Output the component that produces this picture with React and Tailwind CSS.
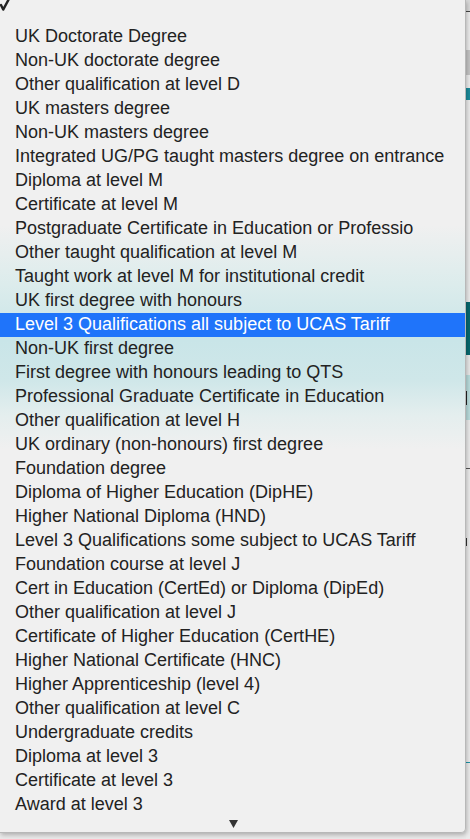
import React from "react";

const items = [
  "UK Doctorate Degree",
  "Non-UK doctorate degree",
  "Other qualification at level D",
  "UK masters degree",
  "Non-UK masters degree",
  "Integrated UG/PG taught masters degree on entrance",
  "Diploma at level M",
  "Certificate at level M",
  "Postgraduate Certificate in Education or Professio",
  "Other taught qualification at level M",
  "Taught work at level M for institutional credit",
  "UK first degree with honours",
  "Level 3 Qualifications all subject to UCAS Tariff",
  "Non-UK first degree",
  "First degree with honours leading to QTS",
  "Professional Graduate Certificate in Education",
  "Other qualification at level H",
  "UK ordinary (non-honours) first degree",
  "Foundation degree",
  "Diploma of Higher Education (DipHE)",
  "Higher National Diploma (HND)",
  "Level 3 Qualifications some subject to UCAS Tariff",
  "Foundation course at level J",
  "Cert in Education (CertEd) or Diploma (DipEd)",
  "Other qualification at level J",
  "Certificate of Higher Education (CertHE)",
  "Higher National Certificate (HNC)",
  "Higher Apprenticeship (level 4)",
  "Other qualification at level C",
  "Undergraduate credits",
  "Diploma at level 3",
  "Certificate at level 3",
  "Award at level 3",
];

const SELECTED = 12;

export default function App() {
  return (
    <div
      className="flex w-[470px] h-[839px] overflow-hidden bg-[#e9e9e9]"
      style={{ fontFamily: '"Liberation Sans", Arial, sans-serif' }}
    >
      {/* menu */}
      <div className="relative z-10 flex flex-col w-[466px] h-[833px] shrink-0 rounded-br-[5px] border-r border-b border-[#b8b8b8] shadow-[1px_2px_4px_rgba(0,0,0,0.25)] bg-[linear-gradient(to_bottom,#f0f0f0_0px,#f0f0f0_225px,#dcecec_285px,#c9e5e8_340px,#cfe7e9_380px,#e4eeee_415px,#f0f0f0_450px,#f0f0f0_100%)]">
        <div className="h-[25px] shrink-0 relative">
          <svg className="absolute left-0 top-0" width="11" height="11" viewBox="0 0 11 11">
            <path d="M1 5 L3.2 9.6 L8.8 -0.8" fill="none" stroke="#222" strokeWidth="2.4" strokeLinejoin="round" strokeLinecap="round" />
          </svg>
        </div>
        {items.map((t, i) => (
          <div
            key={i}
            className={
              i === SELECTED
                ? "h-6 shrink-0 pl-[15px] text-[18px] leading-[23px] text-white bg-[#1f74fa] whitespace-nowrap overflow-hidden"
                : "h-6 shrink-0 pl-[15px] text-[18px] leading-[23px] text-[#222222] whitespace-nowrap overflow-hidden"
            }
          >
            {t}
          </div>
        ))}
        <div className="flex-1 flex justify-center pt-[3px] pl-[1px]">
          <svg width="9" height="8" viewBox="0 0 9 8">
            <path d="M0 0 L9 0 L4.5 8 Z" fill="#333" />
          </svg>
        </div>
      </div>

      {/* background page strip */}
      <div className="flex flex-col w-[4px] shrink-0 text-[14px] leading-none overflow-hidden">
        <div className="h-[12px] bg-[#d8d8d8] border-b border-[#444]" />
        <div className="h-[38px] bg-[#ececec]" />
        <div className="h-[25px] bg-[#c4c4c4]" />
        <div className="h-[13px] bg-[#ececec]" />
        <div className="h-[12px] bg-[#1b8c9b]" />
        <div className="h-[202px] bg-[#ebebeb]" />
        <div className="h-[53px] bg-[#06686e]" />
        <div className="h-[20px] bg-[#e8e8e8]" />
        <div className="h-[45px] bg-[#b9dcdc] flex items-center">
          <div className="w-[1px] h-[14px] bg-[#222]" />
        </div>
        <div className="h-[48px] bg-[#ebebeb]" />
        <div className="h-[1px] bg-[#555]" />
        <div className="h-[69px] bg-[#ebebeb]" />
        <div className="h-[8px] bg-[#ebebeb] flex">
          <div className="w-[1px] bg-[#333]" />
        </div>
        <div className="h-[216px] bg-[#ebebeb]" />
        <div className="h-[1px] bg-[#1a93a8]" />
        <div className="flex-1 bg-[#ebebeb]" />
      </div>
    </div>
  );
}
